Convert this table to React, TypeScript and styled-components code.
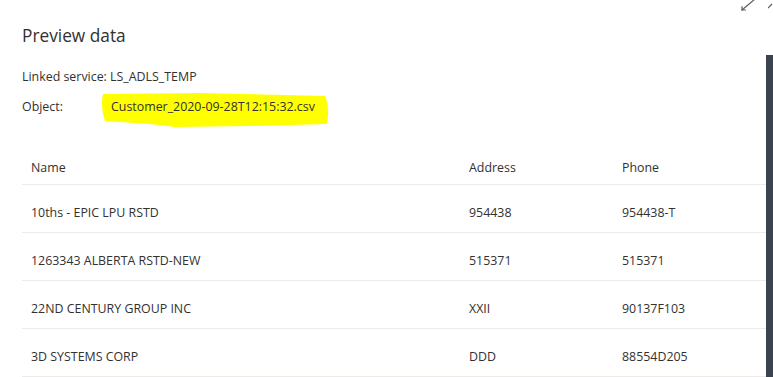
import React from "react";
import styled, { createGlobalStyle } from "styled-components";

const Global = createGlobalStyle`
  html, body { margin: 0; padding: 0; background: #ffffff; }
  body { font-family: "Open Sans", "Noto Sans", sans-serif; color: #323130; overflow: hidden; }
`;

const Page = styled.div`
  position: relative;
  width: 773px;
  height: 377px;
  display: flex;
  overflow: hidden;
`;

const Content = styled.div`
  flex: 1;
  display: flex;
  flex-direction: column;
  padding-left: 22px;
`;

const Title = styled.h1`
  margin: 25px 0 0 0;
  font-size: 17.3px;
  font-weight: 400;
  line-height: 22px;
  color: #323130;
`;

const Meta = styled.div`
  display: flex;
  flex-direction: column;
  gap: 12px;
  margin-top: 21px;
`;

const MetaRow = styled.div`
  display: flex;
  align-items: center;
  font-size: 12.4px;
  line-height: 18px;
`;

const MetaLabel = styled.span<{ $width?: number }>`
  width: ${(p) => (p.$width ? `${p.$width}px` : "auto")};
  flex: none;
`;

const Highlighted = styled.span`
  position: relative;
  isolation: isolate;
`;

const Marker = styled.svg`
  position: absolute;
  left: -11px;
  top: -7px;
  width: 230px;
  height: 37px;
  z-index: -1;
`;

const Table = styled.div`
  display: grid;
  grid-template-columns: 438px 153px 1fr;
  margin-top: 32px;
  font-size: 12.4px;
`;

const Cell = styled.div<{ $header?: boolean }>`
  display: flex;
  align-items: center;
  padding: ${(p) => (p.$header ? "3px 9px 0" : "8px 9px 0")};
  height: ${(p) => (p.$header ? "33px" : "39px")};
  border-bottom: 1px solid #edebe9;
  line-height: 16px;
  color: #323130;
  white-space: nowrap;
`;

const Scrollbar = styled.div`
  width: 7px;
  margin-top: 55px;
  background: #3b4350;
  flex: none;
`;

const IconBar = styled.div`
  position: absolute;
  top: 0;
  right: 0;
  display: flex;
  gap: 12px;
`;

const rows = [
  ["10ths - EPIC LPU RSTD", "954438", "954438-T"],
  ["1263343 ALBERTA RSTD-NEW", "515371", "515371"],
  ["22ND CENTURY GROUP INC", "XXII", "90137F103"],
  ["3D SYSTEMS CORP", "DDD", "88554D205"],
];

export default function App() {
  return (
    <>
      <Global />
      <Page>
        <Content>
          <Title>Preview data</Title>
          <Meta>
            <MetaRow>
              <MetaLabel>Linked service:&nbsp;</MetaLabel>
              <span>LS_ADLS_TEMP</span>
            </MetaRow>
            <MetaRow>
              <MetaLabel $width={89}>Object:</MetaLabel>
              <Highlighted>
                <Marker viewBox="0 0 230 37" aria-hidden>
                  <path
                    d="M3 3 L100 2 L225 5 Q230 17 227 33 L150 35 L75 36 L50 33 L5 30 Q0 17 3 3 Z"
                    fill="#ffff00"
                  />
                </Marker>
                Customer_2020-09-28T12:15:32.csv
              </Highlighted>
            </MetaRow>
          </Meta>
          <Table>
            <Cell $header>Name</Cell>
            <Cell $header>Address</Cell>
            <Cell $header>Phone</Cell>
            {rows.map((r, i) => (
              <React.Fragment key={i}>
                <Cell>{r[0]}</Cell>
                <Cell>{r[1]}</Cell>
                <Cell>{r[2]}</Cell>
              </React.Fragment>
            ))}
          </Table>
        </Content>
        <Scrollbar />
        <IconBar>
          <svg width="16" height="12" viewBox="0 0 16 12" aria-hidden>
            <g stroke="#605e5c" strokeWidth="1.2" fill="none" strokeLinecap="round">
              <path d="M2 10 L15 -1" />
              <path d="M2 10 L2 6.5 M2 10 L5.5 10" />
            </g>
          </svg>
          <svg width="5" height="10" viewBox="0 0 5 10" aria-hidden>
            <path d="M0 8 L4 4" stroke="#605e5c" strokeWidth="1.2" fill="none" />
          </svg>
        </IconBar>
      </Page>
    </>
  );
}
